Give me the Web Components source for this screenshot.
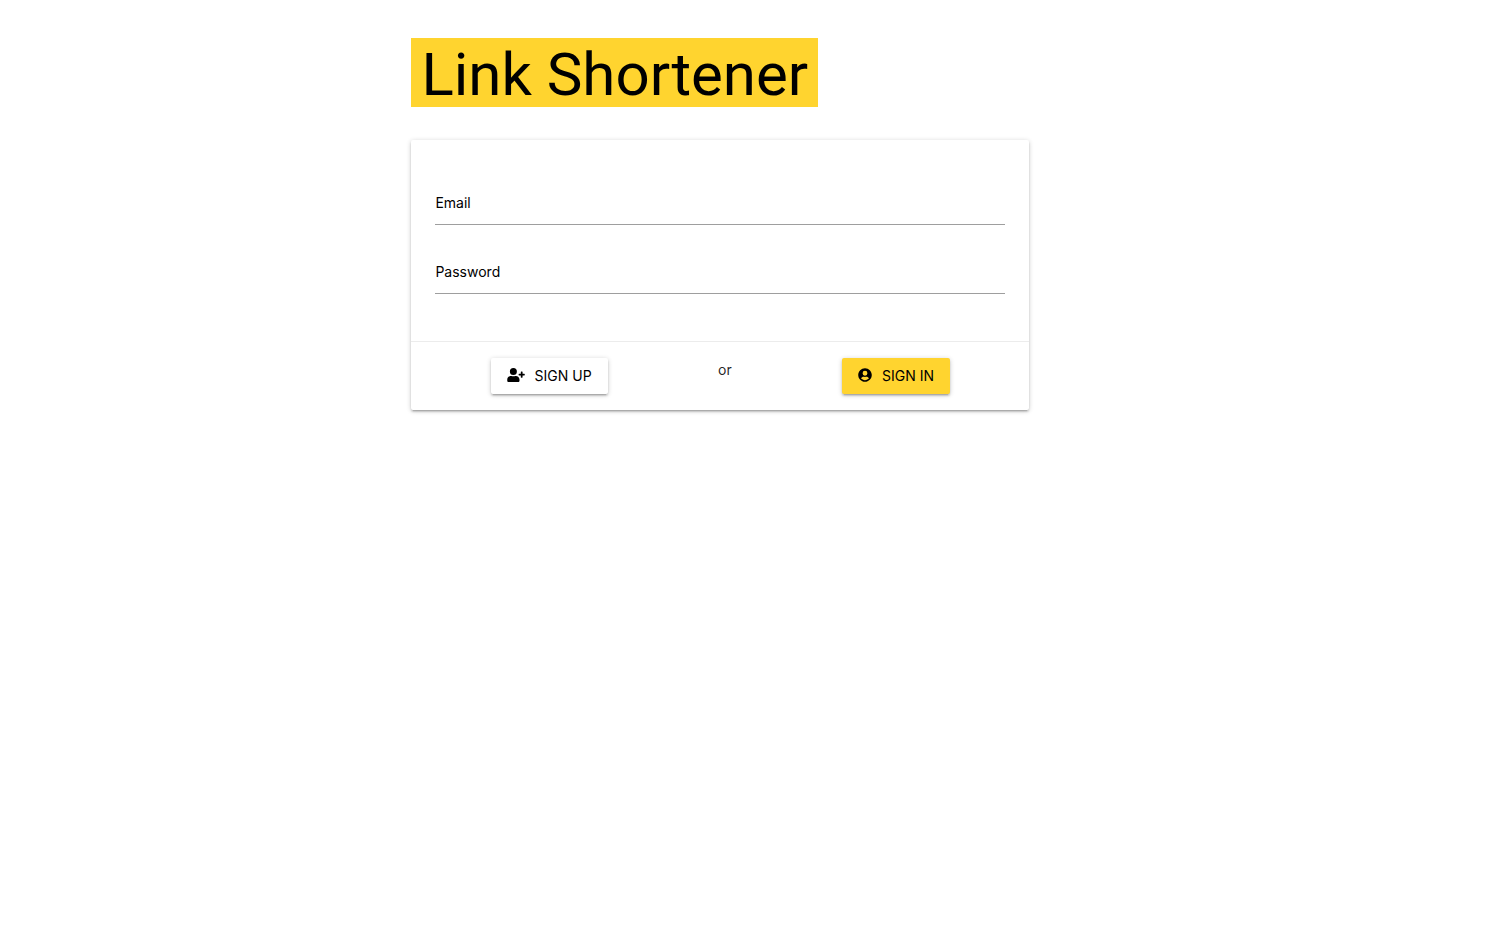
<!DOCTYPE html>
<html lang="en">
<head>
<meta charset="utf-8">
<meta name="viewport" content="width=device-width, initial-scale=1">
<title>Link Shortener</title>
<style>
body { margin: 0; background: #fff; color: rgba(0,0,0,.87); font: 14px/24px Inter, sans-serif; }
</style>
</head>
<body>
<auth-page></auth-page>
<script>
class AuthPage extends HTMLElement {
  constructor() {
    super();
    this.attachShadow({ mode: 'open' }).innerHTML = `
      <style>
        :host { display: grid; grid-template-columns: 27.3% 41% 1fr; align-content: start;
          box-sizing: border-box; min-height: 100vh; padding-top: 38px; }
        main { grid-column: 2; }
        h1 { width: max-content; margin: 0 0 33px; padding: 4px 10px 0; box-sizing: border-box;
          background: #ffd42f; color: #000; font: 400 60px/65px Roboto, sans-serif; }
        @media (max-width: 900px) {
          :host { grid-template-columns: 1fr; padding: 24px; }
          main { grid-column: 1; }
          h1 { width: auto; }
        }
      </style>
      <main>
        <h1>Link Shortener</h1>
        <auth-card>
          <text-field label="Email" type="email"></text-field>
          <text-field label="Password" type="password"></text-field>
          <action-button slot="actions">
            <svg slot="icon" width="18" height="14" viewBox="0 0 640 512"><path d="M224 256a128 128 0 1 0 0-256 128 128 0 0 0 0 256zm90 32h-17a174 174 0 0 1-146 0h-17C60 288 0 348 0 422v42c0 27 21 48 48 48h352c27 0 48-21 48-48v-42c0-74-60-134-134-134zm310-80h-64v-64c0-9-7-16-16-16h-32c-9 0-16 7-16 16v64h-64c-9 0-16 7-16 16v32c0 9 7 16 16 16h64v64c0 9 7 16 16 16h32c9 0 16-7 16-16v-64h64c9 0 16-7 16-16v-32c0-9-7-16-16-16z"/></svg>
            SIGN UP</action-button>
          <span slot="actions">or</span>
          <action-button slot="actions" class="primary">
            <svg slot="icon" width="14" height="14" viewBox="0 0 496 512"><path d="M248 8C111 8 0 119 0 256s111 248 248 248 248-111 248-248S385 8 248 8zm0 96a88 88 0 1 1 0 176 88 88 0 0 1 0-176zm0 344c-59 0-111-27-146-69 19-35 56-59 98-59 8 0 24 8 48 8s40-8 48-8c43 0 79 24 98 59-35 42-87 69-146 69z"/></svg>
            SIGN IN</action-button>
        </auth-card>
      </main>`;
  }
}

class AuthCard extends HTMLElement {
  constructor() {
    super();
    this.attachShadow({ mode: 'open' }).innerHTML = `
      <style>
        :host { display: block; background: #fff; border-radius: 2px;
          box-shadow: 0 2px 2px 0 rgba(0,0,0,.14), 0 3px 1px -2px rgba(0,0,0,.12), 0 1px 5px 0 rgba(0,0,0,.2); }
        .fields { display: grid; gap: 23px; padding: 39px 24px 47px; }
        .actions { display: flex; justify-content: space-around; align-items: flex-start;
          padding: 16px 24px; border-top: 1px solid rgba(160,160,160,.2); }
      </style>
      <form>
        <div class="fields"><slot></slot></div>
        <div class="actions"><slot name="actions"></slot></div>
      </form>`;
  }
}

class TextField extends HTMLElement {
  constructor() {
    super();
    this.attachShadow({ mode: 'open' }).innerHTML = `
      <style>
        :host { display: block; }
        .field { display: grid; height: 46px; }
        label, input { grid-area: 1 / 1; }
        label { color: #000; padding-top: 12px; pointer-events: none; z-index: 1; }
        input { box-sizing: border-box; width: 100%; height: 46px; padding: 0; border: 0;
          border-bottom: 1px solid #9e9e9e; border-radius: 0; background: transparent; outline: 0; font: inherit; }
        .field:focus-within label, .field:has(input:not(:placeholder-shown)) label { padding-top: 0; font-size: 12px; line-height: 12px; }
      </style>
      <div class="field"><label for="control"></label><input id="control" placeholder=" "></div>`;
  }
  connectedCallback() {
    this.shadowRoot.querySelector('label').textContent = this.getAttribute('label');
    this.shadowRoot.querySelector('input').type = this.getAttribute('type');
  }
}

class ActionButton extends HTMLElement {
  constructor() {
    super();
    this.attachShadow({ mode: 'open' }).innerHTML = `
      <style>
        :host { display: block; }
        button { display: flex; align-items: center; gap: 10px; height: 36px; padding: 0 16px; border: 0;
          border-radius: 2px; background: #fff; color: #000; font: 14px/36px Inter, sans-serif;
          cursor: pointer; white-space: nowrap;
          box-shadow: 0 2px 2px 0 rgba(0,0,0,.14), 0 3px 1px -2px rgba(0,0,0,.12), 0 1px 5px 0 rgba(0,0,0,.2); }
        :host(.primary) button { background: #ffd42f; }
        ::slotted(svg) { display: block; fill: currentColor; margin-bottom: 2px; }
      </style>
      <button type="button"><slot name="icon"></slot><span><slot></slot></span></button>`;
  }
}

customElements.define('action-button', ActionButton);
customElements.define('text-field', TextField);
customElements.define('auth-card', AuthCard);
customElements.define('auth-page', AuthPage);
</script>
</body>
</html>
